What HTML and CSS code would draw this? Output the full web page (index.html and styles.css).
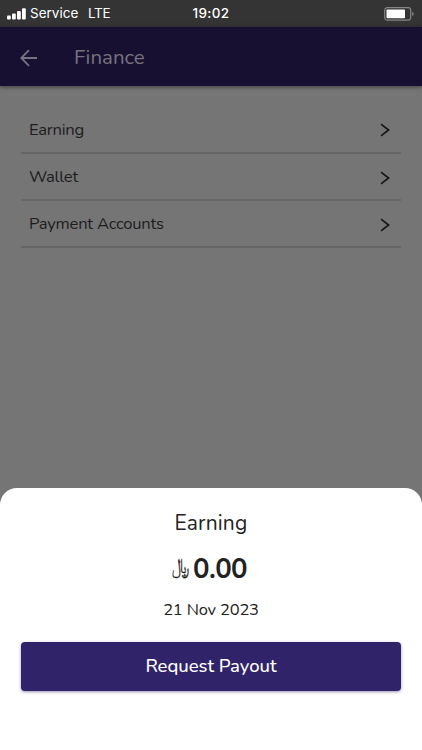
FILE: index.html
```html
<!DOCTYPE html>
<html lang="en">
<head>
<meta charset="utf-8">
<meta name="viewport" content="width=device-width, initial-scale=1">
<title>Finance</title>
<link rel="stylesheet" href="styles.css">
</head>
<body>
<div class="screen">
  <header class="status">
    <div class="carrier">
      <svg class="signal" viewBox="0 0 19 12"><rect x="0" y="7.5" width="3.8" height="4" rx="1"/><rect x="5" y="5.5" width="3.8" height="6" rx="1"/><rect x="10" y="3" width="3.8" height="8.5" rx="1"/><rect x="15" y="0.3" width="3.8" height="11.2" rx="1"/></svg>
      <span class="service">Service</span><span class="network">LTE</span>
    </div>
    <span class="clock">19:02</span>
    <svg class="battery" viewBox="0 0 31 14"><rect x=".7" y=".7" width="26" height="12.4" rx="2.5" fill="none" stroke="#858585" stroke-width="1.2"/><rect x="2.5" y="2.5" width="18.5" height="8.8" rx=".8" fill="#fff"/><path d="M28.2 4.8q3.2 2.2 0 4.4z" fill="#858585"/></svg>
  </header>
  <nav class="appbar">
    <svg class="back" viewBox="0 0 18 18"><path d="M17 9H1.5M9 1.2L1.3 9L9 16.8"/></svg>
    <h1 class="title">Finance</h1>
  </nav>
  <main class="list">
    <a class="row"><span class="label">Earning</span><svg class="chevron" viewBox="0 0 10 14"><path d="M1 1.2L8.6 7L1 12.8"/></svg></a>
    <a class="row"><span class="label">Wallet</span><svg class="chevron" viewBox="0 0 10 14"><path d="M1 1.2L8.6 7L1 12.8"/></svg></a>
    <a class="row"><span class="label">Payment Accounts</span><svg class="chevron" viewBox="0 0 10 14"><path d="M1 1.2L8.6 7L1 12.8"/></svg></a>
  </main>
  <section class="sheet">
    <h2 class="heading">Earning</h2>
    <div class="amount"><span class="currency">﷼</span><span class="value">0.00</span></div>
    <p class="date">21 Nov 2023</p>
    <button class="payout">Request Payout</button>
  </section>
</div>
</body>
</html>
```
FILE: styles.css
```css
* { box-sizing: border-box; }
body { margin: 0; font-family: Nunito, "Noto Sans", sans-serif; }
.screen { width: 422px; height: 750px; display: flex; flex-direction: column; background: #757575; overflow: hidden; }
.status { height: 27px; flex: none; display: grid; grid-template-columns: 1fr auto 1fr; align-items: center; padding: 0 7px; background: #343434; color: #fff; font: 500 13.5px/27px Inter, sans-serif; }
.carrier { display: flex; align-items: center; }
.signal { width: 19px; height: 12px; fill: #fff; margin-right: 4px; }
.service { width: 58px; letter-spacing: 0; white-space: nowrap; font-weight: 400; }
.network { font-weight: 400; letter-spacing: -.3px; }
.clock { font-weight: 500; letter-spacing: .35px; }
.battery { width: 31px; height: 14px; justify-self: end; }
.appbar { height: 59px; flex: none; display: flex; align-items: center; padding: 3px 20px 0; background: #171030; box-shadow: 0 1px 4px rgba(0,0,0,.5); }
.back { width: 18px; height: 18px; fill: none; stroke: #767280; stroke-width: 1.8; margin-right: 36px; }
.title { margin: -2px 0 0; color: #767280; font-size: 20.5px; font-weight: 400; line-height: 30px; }
.list { flex: 1; padding: 20px 21px 0; }
.row { height: 47px; display: flex; align-items: center; justify-content: space-between; padding: 2px 11px 0 8px; border-bottom: 2px solid #656565; }
.row:first-child { height: 48px; }
.label { color: #1d1d1d; font-size: 16.6px; line-height: 24px; letter-spacing: -.25px; margin-top: -1px; }
.row:first-child .label { margin-top: 0; }
.chevron { width: 10px; height: 14px; fill: none; stroke: #151515; stroke-width: 1.6; }
.sheet { height: 262px; flex: none; display: flex; flex-direction: column; align-items: center; padding: 20px 21px 0; background: #fff; border-radius: 17px 17px 0 0; color: #222; }
.heading { margin: 0; height: 30px; line-height: 30px; font-size: 21px; font-weight: 400; letter-spacing: .15px; }
.amount { height: 36px; margin-top: 13px; display: flex; align-items: center; gap: 3px; margin-right: 3px; }
.currency { font-size: 15.5px; line-height: 36px; transform: scaleY(1.35) translateY(-2px); -webkit-text-stroke: .25px #222; }
.value { font-size: 27.5px; line-height: 36px; font-weight: 700; letter-spacing: -.6px; }
.date { margin: 11px 0 0; height: 24px; line-height: 24px; font-size: 16.5px; letter-spacing: -.18px; }
.payout { width: 100%; height: 49px; margin-top: 20px; padding: 0 0 2px; border: 0; border-radius: 4px; background: #31236a; color: #fff; font: 500 18.5px/46px Nunito, "Noto Sans", sans-serif; letter-spacing: -.03px; box-shadow: 0 1px 3px rgba(49,35,106,.5); }
```
